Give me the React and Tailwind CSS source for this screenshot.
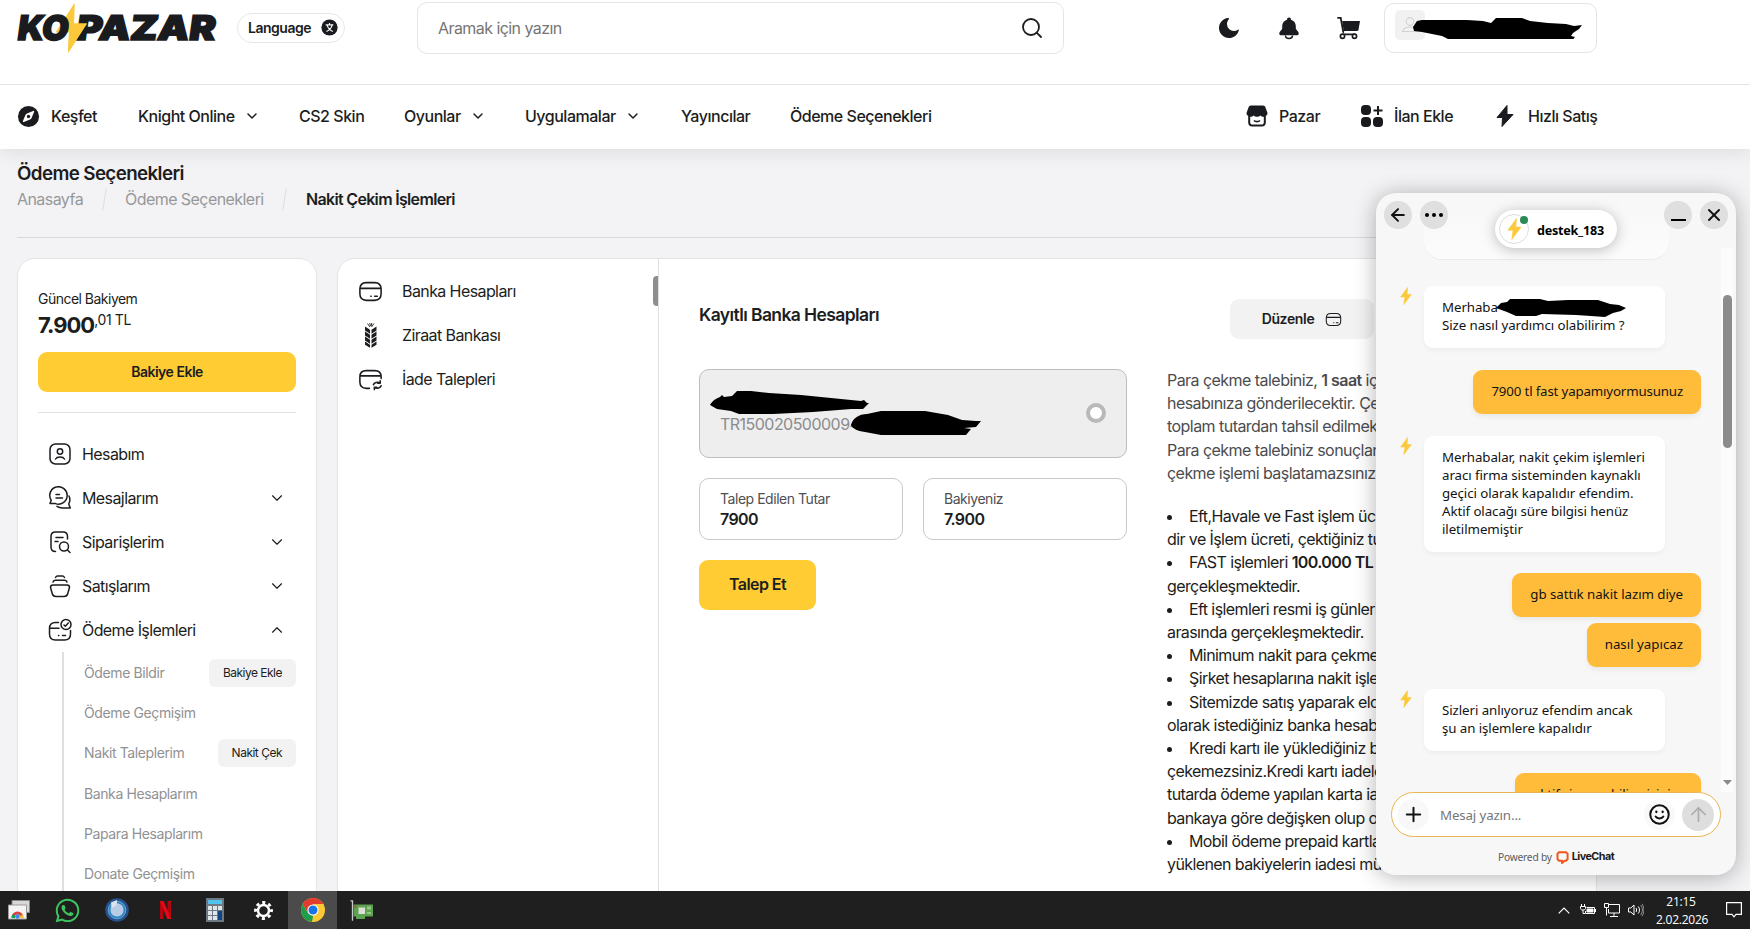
import React from "react";
import { FiChevronDown, FiChevronUp, FiSearch, FiArrowLeft, FiX, FiPlus, FiArrowUp } from "react-icons/fi";
import { FaWhatsapp } from "react-icons/fa";

const NAV = [
  { label: "Knight Online", width: "w-[161px]", arrow: true },
  { label: "CS2 Skin", width: "w-[105px]" },
  { label: "Oyunlar", width: "w-[121px]", arrow: true },
  { label: "Uygulamalar", width: "w-[156px]", arrow: true },
  { label: "Yayıncılar", width: "w-[109px]" },
  { label: "Ödeme Seçenekleri", width: "w-[160px]" },
];

const SUB_ITEMS = [
  { label: "Ödeme Bildir", action: "Bakiye Ekle" },
  { label: "Ödeme Geçmişim" },
  { label: "Nakit Taleplerim", action: "Nakit Çek" },
  { label: "Banka Hesaplarım" },
  { label: "Papara Hesaplarım" },
  { label: "Donate Geçmişim" },
];

const Bolt = ({ className }) => (
  <svg viewBox="0 0 12 18" className={className}>
    <path d="M7.6 0.4 0.6 10h4.2L3.8 17.6 11.4 7.4H7z" fill="#fbc93b" stroke="#fbc93b" strokeWidth="0.5" strokeLinejoin="round" />
  </svg>
);

const Line = ({ className = "size-[24px]", children }) => (
  <svg viewBox="0 0 24 24" fill="none" stroke="#1c1d20" strokeWidth="1.5" strokeLinecap="round" strokeLinejoin="round" className={className}>
    {children}
  </svg>
);

const CardIcon = ({ className }) => (
  <Line className={className}>
    <path d="M1.800 10c0-4 1.700-6.500 6.200-6.500h8c4.500 0 6.200 2.500 6.200 6.500v4c0 4-1.700 6.500-6.200 6.500H8c-4.500 0-6.200-2.500-6.200-6.500z" />
    <path d="M2.300 9h19.400M12.300 16.500h.3M16 16.500h2.500" />
  </Line>
);

const Logo = () => (
  <svg viewBox="0 0 204 56" className="h-14 w-[204px] shrink-0 overflow-visible">
    <g fontFamily="Inter, sans-serif" fontWeight="900" fontSize="34" fill="#1a1b1e" stroke="#1a1b1e" strokeWidth="1.600" strokeLinejoin="miter">
      <text x="59" y="40" textLength="139" lengthAdjust="spacingAndGlyphs" transform="translate(5 0) skewX(-8)">PAZAR</text>
      <path d="M57.500 3 38.500 32.500H52L51 53 70 23.500H57z" fill="#fbc93b" stroke="none" />
      <text x="0" y="40" textLength="51" lengthAdjust="spacingAndGlyphs" transform="translate(5 0) skewX(-8)">KO</text>
    </g>
    <path d="M57.500 3 53 20 52 32.500 51 53 70 23.500H57z" fill="#fbc93b" />
  </svg>
);

const Header = () => (
  <header className="relative z-20 flex h-[85px] items-start border-b border-[#e4e4e4] bg-white pl-[17px]">
    <Logo />
    <div className="mt-[13px] ml-[16px] flex h-[30px] w-[108px] items-center justify-between rounded-full border border-[#e6e6e6] pr-[6px] pb-px pl-[10px] text-[14px] font-semibold tracking-[-0.035em]">
      Language
      <svg viewBox="0 0 18 18" className="size-[17px]">
        <circle cx="9" cy="9" r="8.600" fill="#1a1b1e" />
        <path d="M5 6.200h8M9 4.200v2M6.500 6.500c.8 3 3 5.500 6 6.800M11.800 6.500c-.8 3-3 5.500-6 6.800" stroke="#fff" strokeWidth="1.200" fill="none" />
      </svg>
    </div>
    <div className="mt-[2px] ml-[72px] flex h-[52px] w-[647px] items-center justify-between rounded-[10px] border border-[#e4e4e4] pr-[19px] pl-[20px] text-[16px] tracking-[-0.035em] text-[#757575]">
      Aramak için yazın
      <FiSearch className="size-[24px] text-[#1c1d20]" strokeWidth={1.800} />
    </div>
    <div className="mt-[16px] ml-[153px] flex gap-[36px]">
      <svg viewBox="0 0 24 24" className="size-[24px]" fill="#1a1b1e">
        <path d="M11 2C6 2.500 2 6.700 2 12c0 5.500 4.500 10 10 10 4.700 0 8.700-3.200 9.800-7.600.2-.8-.4-1-.9-.6A6.700 6.700 0 0 1 17 15a7 7 0 0 1-7-7c0-1.900.7-3.500 1.800-4.800.5-.7.1-1.300-.8-1.200z" />
      </svg>
      <svg viewBox="0 0 24 24" className="size-[24px]" fill="#1a1b1e">
        <path d="M12 1.500a2 2 0 0 0-2 2.200C7 4.600 5.200 7 5.200 10v2.500c0 1.300-3 2.800-3 5 0 1.200.8 1.800 2 1.800h15.600c1.200 0 2-.6 2-1.800 0-2.200-3-3.700-3-5V10c0-3-1.800-5.400-4.800-6.300a2 2 0 0 0-2-2.200z" />
        <path d="M8.500 19.500a3.500 3 0 0 0 7 0" fill="none" stroke="#1a1b1e" strokeWidth="1.500" />
      </svg>
      <svg viewBox="0 0 24 24" className="size-[24px]" fill="#1a1b1e">
        <path d="M5.200 5H23l-1.500 8.700c-.1.800-.6 1.200-1.400 1.200H6.800z" />
        <path d="M1 1.800h2.700L6.300 16M6 18.300h12" fill="none" stroke="#1a1b1e" strokeWidth="1.800" strokeLinecap="round" />
        <circle cx="5.500" cy="20.200" r="2.100" fill="#fff" stroke="#1a1b1e" strokeWidth="1.700" />
        <circle cx="17.500" cy="20.200" r="2.100" fill="#fff" stroke="#1a1b1e" strokeWidth="1.700" />
      </svg>
    </div>
    <div className="relative mt-[3px] ml-[23px] h-[50px] w-[213px] rounded-[10px] border border-[#e4e4e4] pt-[6px] pl-[10px]">
      <svg viewBox="0 0 30 30" className="size-[30px]">
        <rect width="30" height="30" rx="5" fill="#f1f1f1" />
        <g fill="none" stroke="#d2d2d2" strokeWidth="1.200">
          <circle cx="15" cy="11.500" r="3.800" />
          <path d="M7.500 21.500c1-3 4-4.500 7.500-4.500s6.500 1.500 7.500 4.500z" />
        </g>
      </svg>
      <svg viewBox="0 0 172 24" className="absolute top-[11px] left-[27px] h-[24px] w-[172px]">
        <path d="M1 12 5 6l5-1 45 0 16 1 8 2 5-5 26 0 8 3 18 2 18 1 8 2 8-1-3 4-6 4-2 3 4 1-4 5-8 1-40 0-40-2-33-1-8-4-20-4-8-1z" />
      </svg>
    </div>
  </header>
);

const NavBar = () => (
  <nav className="relative z-10 flex h-[64px] items-center bg-white pb-[2px] pl-[17px] text-[16px] font-medium tracking-[-0.03em] shadow-[0_2px_20px_rgba(0,0,0,0.1)]">
    <div className="flex w-[121px] items-center gap-[11px]">
      <svg viewBox="0 0 24 24" className="size-[23px]">
        <circle cx="12" cy="12" r="11" fill="#1a1b1e" />
        <path d="M16.800 6.200c.8-.3 1.300.2 1 1l-2.600 6.300c-.3.800-.9 1.400-1.700 1.700l-6.300 2.600c-.8.300-1.300-.2-1-1l2.600-6.300c.3-.8.900-1.400 1.700-1.700z" fill="#fff" />
        <circle cx="12" cy="12" r="1.700" fill="#1a1b1e" />
      </svg>
      Keşfet
    </div>
    {NAV.map((item) => (
      <div key={item.label} className={`flex items-center gap-[9px] whitespace-nowrap ${item.width}`}>
        {item.label}
        {item.arrow && <FiChevronDown className="size-[16px]" strokeWidth={2.200} />}
      </div>
    ))}
    <div className="ml-[295px] flex w-[115px] items-center gap-[10px]">
      <svg viewBox="0 0 24 24" className="size-[24px]">
        <path d="M6 1.500h12c1.300 0 2 .7 2.400 1.800L22.500 9a3 3 0 0 1-1.700 3v6.500c0 2.500-1.500 4-4 4H7.200c-2.500 0-4-1.500-4-4V12a3 3 0 0 1-1.700-3l2.100-5.700C4 2.200 4.700 1.500 6 1.500z" fill="#1a1b1e" />
        <path d="M5.200 12.800c1.500.2 2.600-.4 3.300-1.400 1.800 1.900 5.200 1.900 7 0 .7 1 1.800 1.600 3.300 1.400v5.500c0 1.500-.8 2.300-2.300 2.300h-9c-1.500 0-2.300-.8-2.300-2.300z" fill="#fff" />
        <path d="M9 16.500c1.500 1.600 4.500 1.600 6 0" fill="none" stroke="#1a1b1e" strokeWidth="1.700" />
      </svg>
      Pazar
    </div>
    <div className="flex w-[133px] items-center gap-[10px]">
      <svg viewBox="0 0 24 24" className="size-[24px]" fill="#1a1b1e">
        <rect x="1" y="1" width="10" height="10" rx="4" />
        <rect x="1" y="13" width="10" height="10" rx="4" />
        <rect x="13" y="13" width="10" height="10" rx="4" />
        <path d="M18 2v9M13.500 6.500h9" stroke="#1a1b1e" strokeWidth="2" />
      </svg>
      İlan Ekle
    </div>
    <div className="flex items-center gap-[11px]">
      <svg viewBox="0 0 24 24" className="size-[24px]">
        <path d="M14 1.500 4 13.500h5.500l-.5 9L20 10.500h-6z" fill="#1a1b1e" stroke="#1a1b1e" strokeWidth="1" strokeLinejoin="round" />
      </svg>
      Hızlı Satış
    </div>
  </nav>
);

const MenuRow = ({ icon, label, arrow }) => (
  <div className="flex h-[44px] items-center pr-[10px] pl-[10px] text-[16px] tracking-[-0.037em]">
    {icon}
    <span className="ml-[10px] flex-1">{label}</span>
    {arrow === "down" && <FiChevronDown className="size-[18px]" strokeWidth={1.500} />}
    {arrow === "up" && <FiChevronUp className="size-[18px]" strokeWidth={1.500} />}
  </div>
);

const Sidebar = () => (
  <aside className="h-[660px] w-[300px] shrink-0 rounded-[18px] border border-[#e4e4e6] bg-white px-[20px] pt-[29px]">
    <div className="h-[22px] text-[14px] leading-[22px] tracking-[-0.037em]">Güncel Bakiyem</div>
    <div className="flex h-[42px] items-start">
      <span className="mt-[2px] text-[22px] leading-[26px] font-bold tracking-[-0.045em]">7.900</span>
      <span className="text-[14px] leading-[20px] tracking-[-0.025em]">,01 TL</span>
    </div>
    <button className="block h-[40px] w-full rounded-[9px] bg-[#ffcc33] pb-[2px] text-[14px] font-semibold tracking-[-0.035em]">Bakiye Ekle</button>
    <div className="mt-[20px] mb-[19px] h-px bg-[#e0e0e0]" />
    <MenuRow
      label="Hesabım"
      icon={
        <Line>
          <rect x="2" y="2" width="20" height="20" rx="5.500" />
          <circle cx="12" cy="9.500" r="2.700" />
          <path d="M7.500 17c1.500-2.600 7.500-2.600 9 0" />
        </Line>
      }
    />
    <MenuRow
      label="Mesajlarım"
      arrow="down"
      icon={
        <Line>
          <path d="M3.200 14.200A8.700 8.700 0 1 1 7.500 17.600H2l1.200-3.400zM8 8.500h3.500M8 12h6.500" />
          <path d="M21 10c1.200 2.500 1.200 5.300-.3 8l1.600 4H15c-2.300.1-4.400-.4-6-1.600" />
        </Line>
      }
    />
    <MenuRow
      label="Siparişlerim"
      arrow="down"
      icon={
        <Line>
          <path d="M7.500 21.500C4 21.500 3 20 3 17V6.500C3 3.500 4.500 2 7.500 2H15c3 0 4.500 1.500 4.500 4.500V9M8 7.500h7M7 11.500h3" />
          <circle cx="16" cy="16.500" r="4.500" />
          <path d="m19.500 20 2.500 2.500" />
        </Line>
      }
    />
    <MenuRow
      label="Satışlarım"
      arrow="down"
      icon={
        <Line>
          <path d="M2.500 13.500c0-1.500 1-2.500 2.500-2.500h14c1.500 0 2.500 1 2.500 2.500l-1.800 6.300c-.5 1.700-1.500 2.700-3.500 2.700H7.800c-2 0-3-1-3.500-2.700zM5 8c.5-1.300 1.200-1.700 2.500-1.700h9c1.300 0 2 .4 2.500 1.700M7.500 3.500C8 2.500 8.600 2 9.500 2h5c.9 0 1.500.5 2 1.500" />
        </Line>
      }
    />
    <MenuRow
      label="Ödeme İşlemleri"
      arrow="up"
      icon={
        <Line>
          <path d="M10.500 4.500H7.500C3.500 4.500 1.500 6.500 1.500 10.500v5.500c0 4 2 6 6 6h9c4 0 6-2 6-6v-3.500M1.500 10.200h9.500M10.500 17.500h.3M14.500 17.500h3" />
          <circle cx="18" cy="6.500" r="5" />
          <path d="m16 7 1.300 1.200 3-3.200" />
        </Line>
      }
    />
    <div className="ml-[24px] border-l-2 border-[#dfdfe1] pl-[20px]">
      {SUB_ITEMS.map((item) => (
        <div key={item.label} className="flex h-[40.300px] items-center justify-between text-[14px] tracking-[-0.028em] text-[#919193]">
          {item.label}
          {item.action && (
            <span className="mt-px rounded-[6px] bg-[#f2f2f2] px-[14px] text-[12px] leading-[28px] tracking-[-0.042em] text-[#1c1d20]">{item.action}</span>
          )}
        </div>
      ))}
      <div className="h-4" />
    </div>
  </aside>
);

const SubMenu = () => (
  <div className="relative w-[321px] shrink-0 border-r border-[#e0e0e2] pt-[10px] pl-[20px] text-[16px] tracking-[-0.037em]">
    <div className="flex h-[44px] items-center gap-[19px]"><CardIcon className="size-[25px]" />Banka Hesapları</div>
    <div className="flex h-[44px] items-center gap-[19px]">
      <svg viewBox="0 0 25 25" className="size-[25px]" fill="#1c1d20">
        {[5, 10, 15].map((y) => (
          <g key={y}>
            <path d={`M7 ${y - 1.500}l5 3.200v4L7 ${y + 2.500}z`} />
            <path d={`M18.500 ${y - 1.500}l-5 3.200v4l5-3.200z`} />
          </g>
        ))}
        <path d="M7 18.500l5 3.200v3L7 21.800zM18.500 18.500l-5 3.200v3l5-2.900z" />
        <path d="M9.500.5 12 4M16 .5 13.500 4M11.700 0l.8 3M13.800 0l-.6 3" stroke="#1c1d20" strokeWidth=".9" />
      </svg>
      Ziraat Bankası
    </div>
    <div className="flex h-[44px] items-center gap-[19px]">
      <Line className="size-[25px]">
        <path d="M11 20.500H8c-4.500 0-6.200-2.400-6.200-6V9.500c0-3.600 1.700-6 6.200-6h8c4.500 0 6.200 2.400 6.200 6V11M2.300 8.500h19.400" />
        <path d="M14.800 17c.6-2.200 4-3.200 6.200-1.500M21.300 13.300v2.300h-2.300M22.200 18c-.6 2.200-4 3.200-6.200 1.500M15.700 21.700v-2.300H18" />
      </Line>
      İade Talepleri
    </div>
    <div className="absolute top-[17px] right-0 h-[30px] w-[5px] rounded-l-[4px] bg-[#8d8e90]" />
  </div>
);

const Field = ({ label, value }) => (
  <div className="h-[62px] rounded-[10px] border border-[#c9c9c9] pt-[10px] pl-[20px]">
    <div className="text-[14px] leading-[20px] tracking-[-0.033em] text-[#4e4f52]">{label}</div>
    <div className="text-[16px] leading-[20px] font-semibold tracking-[-0.04em]">{value}</div>
  </div>
);

const BankAccounts = () => (
  <div className="w-[428px] shrink-0">
    <h2 className="mt-[44px] h-[24px] text-[17.500px] leading-[24px] font-semibold tracking-[-0.034em]">Kayıtlı Banka Hesapları</h2>
    <div className="relative mt-[42px] flex h-[89px] items-center justify-between rounded-[10px] border border-[#bdbdbd] bg-[#eeeeee] pr-[20px] pb-[2px] pl-[20px]">
      <span className="mt-[22px] text-[16px] tracking-[-0.033em] text-[#8b8b8d]">TR1500205000094</span>
      <span className="size-[20px] rounded-full border-[4.500px] border-[#b9b9b9] bg-white" />
      <svg viewBox="0 0 280 60" className="absolute top-[15px] left-[3px] h-[60px] w-[280px]">
        <path d="M7 20c3-5 7-7 10-8l2-2 2 2 8-1 5-5h14l18 2 32 2 30 3 20 2 10 1 3-1 3 3 2 0-6 6-12 0-38 3-40 2-34 0-8-3-14-2z" />
        <path d="M148 40c2-7 8-11 16-11l14-3h44l23 4 14 5 14 1 5 0-5 6-12 1 7 1-5 6-12 0H178l-16-3c-8-1-13-4-14-7z" />
      </svg>
    </div>
    <div className="mt-[20px] grid grid-cols-2 gap-[20px]">
      <Field label="Talep Edilen Tutar" value="7900" />
      <Field label="Bakiyeniz" value="7.900" />
    </div>
    <button className="mt-[20px] h-[50px] w-[117px] rounded-[9px] bg-[#ffcc33] pb-[2px] text-[16px] font-semibold tracking-[-0.035em]">Talep Et</button>
  </div>
);

const Info = () => (
  <div className="ml-[40px] w-[389px] shrink-0 text-[16px] leading-[23.200px] tracking-[-0.037em] whitespace-nowrap">
    <div className="mt-[40px] ml-[63px] flex h-[40px] w-[144px] items-center justify-center gap-[11px] rounded-[9px] bg-[#f2f2f2] text-[14px] font-semibold tracking-[-0.025em]">
      Düzenle
      <CardIcon className="size-[17px]" />
    </div>
    <p className="mt-[30px] tracking-[-0.034em] text-[#4b4c4f]">
      Para çekme talebiniz, <b className="font-semibold">1 saat</b> içinde<br />
      hesabınıza gönderilecektir. Çekim<br />
      toplam tutardan tahsil edilmektedir.<br />
      Para çekme talebiniz sonuçlanmadan<br />
      çekme işlemi başlatamazsınız.
    </p>
    <ul className="mt-[20px] list-inside list-disc">
      <li>Eft,Havale ve Fast işlem ücreti<br />dir ve İşlem ücreti, çektiğiniz tutardan</li>
      <li>FAST işlemleri <b className="font-semibold">100.000 TL</b><br />gerçekleşmektedir.</li>
      <li>Eft işlemleri resmi iş günleri<br />arasında gerçekleşmektedir.</li>
      <li>Minimum nakit para çekme</li>
      <li>Şirket hesaplarına nakit işlemi</li>
      <li>Sitemizde satış yaparak elde<br />olarak istediğiniz banka hesabına</li>
      <li>Kredi kartı ile yüklediğiniz bakiye<br />çekemezsiniz.Kredi kartı iadeleri<br />tutarda ödeme yapılan karta iade<br />bankaya göre değişken olup o</li>
      <li>Mobil ödeme prepaid kartlar<br />yüklenen bakiyelerin iadesi mümkün</li>
    </ul>
  </div>
);

const AgentMessage = ({ className, children }) => (
  <div className={`relative ml-[48px] w-[241px] shrink-0 rounded-[9px] bg-white px-[18px] pt-[12px] pb-[14px] tracking-[-0.006em] whitespace-nowrap shadow-[0_3px_5px_rgba(0,0,0,0.04)] ${className}`}>
    <Bolt className="absolute top-[1px] left-[-24px] h-[18px] w-[12px]" />
    {children}
  </div>
);

const UserMessage = ({ className, children }) => (
  <div className={`mr-[35px] shrink-0 self-end rounded-[9px] bg-[#ffbc3b] px-[18px] pt-[12px] pb-[14px] whitespace-nowrap shadow-[0_3px_5px_rgba(0,0,0,0.06)] ${className}`}>{children}</div>
);

const Chat = () => (
  <section className="absolute top-[193px] left-[1376px] z-20 h-[682px] w-[360px] overflow-hidden rounded-[20px] bg-[#f7f7f7] font-['Noto_Sans',sans-serif] text-[13.300px] leading-[18px] text-[#131313] shadow-[0_2px_22px_rgba(0,0,0,0.3)]">
    <div className="relative flex h-[599px] flex-col overflow-hidden">
      <div className="ml-[48px] h-[67px] w-[245px] shrink-0 rounded-b-[18px] border-b border-[#ebebeb] bg-gradient-to-b from-[#f7f7f7] to-[#fcfcfc]" />
      <AgentMessage className="mt-[26px]">
        Merhaba<br />Size nasıl yardımcı olabilirim ?
        <svg viewBox="0 0 130 20" className="absolute top-[11px] left-[72px] h-[20px] w-[130px]">
          <path d="M0 11 5 6 11 5l3-3 30 0 8 2 20-1 30 0 12 4 9 1 7 3-5 3-8 2-8 4-14-1-15-1-34-1-6 2H20l-9-4z" />
        </svg>
      </AgentMessage>
      <UserMessage className="mt-[22px] tracking-[-0.012em]">7900 tl fast yapamıyormusunuz</UserMessage>
      <AgentMessage className="mt-[22px]">
        Merhabalar, nakit çekim işlemleri<br />aracı firma sisteminden kaynaklı<br />geçici olarak kapalıdır efendim.<br />Aktif olacağı süre bilgisi henüz<br />iletilmemiştir
      </AgentMessage>
      <UserMessage className="mt-[21px] tracking-[-0.004em]">gb sattık nakit lazım diye</UserMessage>
      <UserMessage className="mt-[6px]">nasıl yapıcaz</UserMessage>
      <AgentMessage className="mt-[22px]">Sizleri anlıyoruz efendim ancak<br />şu an işlemlere kapalıdır</AgentMessage>
      <UserMessage className="mt-[22px] w-[186px] tracking-[-0.012em]">aktif siz yapabilirmisiniz</UserMessage>
      <div className="absolute top-[55px] right-[3px] flex h-[544px] w-[12px] flex-col items-center bg-[#fcfcfc]">
        <div className="mt-[47px] h-[153px] w-[9px] rounded-full bg-[#8c8c8c]" />
        <svg viewBox="0 0 9 6" className="mt-[332px] h-[6px] w-[9px]"><path d="M0 0h9L4.500 5z" fill="#8a8a8a" /></svg>
      </div>
    </div>
    <div className="absolute inset-x-0 top-0 flex justify-between px-[8px] pt-[8px]">
      <div className="flex gap-[8px]">
        <span className="flex size-[28px] items-center justify-center rounded-full bg-[#dfdfdf]"><FiArrowLeft className="size-[20px]" strokeWidth={2.400} /></span>
        <span className="flex size-[28px] items-center justify-center gap-[3px] rounded-full bg-[#dfdfdf]">
          <i className="size-[4px] rounded-full bg-black" />
          <i className="size-[4px] rounded-full bg-black" />
          <i className="size-[4px] rounded-full bg-black" />
        </span>
      </div>
      <div className="absolute top-[17px] left-[119px] flex h-[38px] w-[122px] items-center rounded-full bg-white pl-[4px] shadow-[0_2px_14px_rgba(0,0,0,0.25)]">
        <span className="relative flex size-[30px] items-center justify-center rounded-full border border-[#dddddd]">
          <Bolt className="h-[22px] w-[15px]" />
          <i className="absolute top-[1px] right-0 size-[8px] rounded-full bg-[#2c8a55]" />
        </span>
        <span className="mt-[3px] ml-[8px] text-[12.600px] font-bold tracking-[-0.02em] text-black">destek_183</span>
      </div>
      <div className="flex gap-[8px]">
        <span className="flex size-[28px] items-end justify-center rounded-full bg-[#dfdfdf] pb-[8px]"><i className="h-[2px] w-[15px] bg-black" /></span>
        <span className="flex size-[28px] items-center justify-center rounded-full bg-[#dfdfdf]"><FiX className="size-[20px]" strokeWidth={2.400} /></span>
      </div>
    </div>
    <div className="relative mx-[15px] flex h-[45px] items-center rounded-full border border-[#eab552] bg-white pr-[6px] pl-[6px]">
      <span className="flex size-[31px] items-center justify-center rounded-full bg-[#f8f8f8]"><FiPlus className="size-[23px]" strokeWidth={2.100} /></span>
      <span className="ml-[11px] flex-1 tracking-[-0.01em] text-[#767676]">Mesaj yazın...</span>
      <span className="mr-[7px] flex size-[31px] items-center justify-center rounded-full bg-[#f9f9f9]">
        <svg viewBox="0 0 20 20" className="size-[21px]" fill="none" stroke="#111" strokeWidth="1.900" strokeLinecap="round">
          <circle cx="10" cy="10" r="8.800" />
          <path d="M6.300 12c1.500 2.500 5.900 2.500 7.400 0" />
          <path d="M7 7.400v.3M13 7.400v.3" strokeWidth="2.200" />
        </svg>
      </span>
      <span className="flex size-[32px] items-center justify-center rounded-full bg-[#dedede]"><FiArrowUp className="size-[23px] text-[#adadad]" strokeWidth={1.800} /></span>
    </div>
    <div className="mt-[11px] flex items-center pl-[122px] text-[10.200px] tracking-[-0.02em] text-[#5c5c5c]">
      Powered by
      <svg viewBox="0 0 13 13" className="ml-[4px] size-[13px]">
        <path d="M3 1.300h7l1.600 1.500v5.500L10 9.800H8.500L6 12V9.800H3L1.500 8.300V2.800z" fill="none" stroke="#f0561d" strokeWidth="2" strokeLinejoin="round" />
      </svg>
      <span className="ml-[3px] font-['Inter'] text-[10.800px] font-bold tracking-[-0.05em] text-[#1b1b20]">LiveChat</span>
    </div>
  </section>
);

const Taskbar = () => (
  <footer className="absolute inset-x-0 bottom-0 z-30 flex h-[38px] items-center justify-between overflow-hidden bg-[#1f1f1f] font-['Open_Sans',sans-serif] text-white">
    <div className="-ml-[6px] flex h-full">
      <span className="flex w-[49px] items-center justify-center">
        <svg viewBox="0 0 22 20" className="h-[20px] w-[22px]">
          <path d="M4 0.500h17.500v12H4z" fill="#d7d7d7" stroke="#888" />
          <path d="M.5 5h18v14H.5z" fill="#f4f4f4" stroke="#9b9b9b" />
          <path d="M3.500 17.500a6 6 0 0 1 12 0h-3a3 3 0 0 0-6 0z" fill="#db4437" />
          <path d="M3.500 18a6 6 0 0 1 1.500-4l2.500 2-.5 2z" fill="#109d58" />
          <path d="M12.500 18l-.5-2 2.500-1.500 1.200 3.500z" fill="#f7c02c" />
          <circle cx="9.500" cy="16.500" r="2.300" fill="#4285f4" />
        </svg>
      </span>
      <span className="flex w-[49px] items-center justify-center"><FaWhatsapp className="size-[27px] text-[#3fc55f]" /></span>
      <span className="flex w-[49px] items-center justify-center">
        <svg viewBox="0 0 24 24" className="size-[24px]">
          <circle cx="12" cy="12" r="11.800" fill="#29508c" />
          <circle cx="12" cy="12" r="8.800" fill="#2f87bd" stroke="#61a6d3" strokeWidth="1" />
          <path d="M12 5.500c4 0 6.500 2.500 6.500 6.500s-3 6.500-6.500 6.500-6.500-3-6.500-6c0-3 1-6 2.500-9z" fill="#b9cce5" />
          <path d="M6 4.500 12 2v5l-5 3z" fill="#d9e2f0" />
        </svg>
      </span>
      <span className="flex w-[49px] items-center justify-center">
        <svg viewBox="0 0 11 18" className="h-[18px] w-[11px]">
          <path d="M0 0h3.500v18H0zM7.500 0H11v18H7.500z" fill="#b20710" />
          <path d="M0 0h3.700L11 18H7.300z" fill="#e50914" />
        </svg>
      </span>
      <span className="flex w-[49px] items-center justify-center">
        <svg viewBox="0 0 18 24" className="h-[24px] w-[18px]">
          <rect width="18" height="24" fill="#6d7a83" />
          <rect x="2" y="2" width="14" height="4" fill="#4fc4ec" />
          {[8, 13, 18].map((y) => (
            <g key={y} fill="#dfe4e8">
              <rect x="2" y={y} width="4" height="4" />
              <rect x="7" y={y} width="4" height="4" />
              {y === 8 && <rect x="12" y={y} width="4" height="4" />}
            </g>
          ))}
          <rect x="12" y="13" width="4" height="9" fill="#114482" />
        </svg>
      </span>
      <span className="flex w-[49px] items-center justify-center">
        <svg viewBox="0 0 20 20" className="size-[19px]">
          <circle cx="10" cy="10" r="5.800" fill="none" stroke="#fff" strokeWidth="2.600" />
          <circle cx="10" cy="10" r="8.400" fill="none" stroke="#fff" strokeWidth="3" strokeDasharray="3.300 3.300" strokeDashoffset="1.650" />
        </svg>
      </span>
      <span className="flex w-[49px] items-center justify-center bg-[#4b4b4b]">
        <svg viewBox="0 0 24 24" className="size-[24px]">
          <circle cx="12" cy="12" r="12" fill="#fcc934" />
          <path d="M12 12 6.800 15 1.600 6A12 12 0 0 1 22.400 6H12z" fill="#e33b2e" />
          <path d="M1.600 6 6.800 15 12 18l-.8 6A12 12 0 0 1 1.600 6z" fill="#1e9e4a" />
          <path d="M17.200 15 12 24h-1l3-8z" fill="#fcc934" />
          <circle cx="12" cy="12" r="5.600" fill="#fff" />
          <circle cx="12" cy="12" r="4.500" fill="#1a73e8" />
        </svg>
      </span>
      <span className="flex w-[49px] items-center justify-center">
        <svg viewBox="0 0 23 21" className="h-[21px] w-[23px]">
          <path d="M.5.8h2v20" fill="none" stroke="#c8cdd0" strokeWidth="1.300" />
          <path d="M3.500 4.500H23v12h-8v2.500H6v-2.500H3.500z" fill="#5ca24f" />
          <rect x="8.500" y="7.500" width="6.500" height="6.500" fill="#d9dfd6" />
          <path d="M17 6.500h4v3h-4zM17 12h4v2h-4z" fill="#93c886" />
          <path d="M4.500 5.500h2v2h-2z" fill="#b1483a" />
        </svg>
      </span>
    </div>
    <div className="flex h-full items-center pr-[8px]">
      <svg viewBox="0 0 12 7" className="h-[7px] w-[12px]" fill="none" stroke="#fff" strokeWidth="1.200"><path d="M.7 6.300 6 1l5.300 5.300" /></svg>
      <svg viewBox="0 0 16 12" className="ml-[10px] h-[12px] w-[16px]" fill="none" stroke="#fff">
        <path d="M1.500 0v2M4.500 0v2M.5 2.500h5v2c0 1-1 1.500-2.500 1.500S.5 5.500.5 4.500zM3 6v3.500h2M6.500 3.500h8v6h-9v-2.500M15.500 5v3" />
        <path d="M7 5h6v3H7z" fill="#fff" />
      </svg>
      <svg viewBox="0 0 16 14" className="ml-[8px] h-[14px] w-[16px]" fill="none" stroke="#fff">
        <path d="M5 1.500h10.500v8.500h-11V6M10 10v3M6 13.500h8M.5.500h4v4h-4zM2.500 4.500v8" />
      </svg>
      <svg viewBox="0 0 16 14" className="ml-[8px] h-[14px] w-[16px]" fill="none" stroke="#fff">
        <path d="M.5 5h2.300l3.200-3v10L2.800 9H.5zM8 5c.8 1.200.8 2.800 0 4M10.300 3.500c1.600 2 1.600 5 0 7" />
        <path d="M12.600 2c2.400 3 2.400 7 0 10M14 .800c2.500 3.500 2.500 8.800 0 12.400" opacity=".5" />
      </svg>
      <div className="mt-px ml-[12px] w-[50px] text-center text-[12px] leading-[18px] tracking-[-0.02em] whitespace-nowrap">21:15<br />2.02.2026</div>
      <svg viewBox="0 0 16 16" className="ml-[20px] h-[16px] w-[16px]" fill="none" stroke="#fff" strokeWidth="1.200"><path d="M.6.6h14.800v11.800H10L8 14.800 6 12.400H.6z" /></svg>
    </div>
  </footer>
);

const App = () => (
  <div className="relative h-[929px] w-[1750px] overflow-hidden bg-[#f3f3f5] font-['Inter',sans-serif] text-[#1c1d20]">
    <Header />
    <NavBar />
    <main className="px-[17px]">
      <h1 className="mt-[12px] h-[26px] text-[18.800px] leading-[26px] font-semibold tracking-[-0.033em]">Ödeme Seçenekleri</h1>
      <div className="flex h-[24px] items-center text-[16px] tracking-[-0.035em] text-[#97989a]">
        <span className="w-[87px]">Anasayfa</span>
        <i className="h-[23px] w-px rotate-[9deg] bg-[#dededf]" />
        <span className="ml-[20px] w-[159px]">Ödeme Seçenekleri</span>
        <i className="h-[23px] w-px rotate-[9deg] bg-[#dededf]" />
        <span className="ml-[21px] font-semibold tracking-[-0.042em] text-[#1c1d20]">Nakit Çekim İşlemleri</span>
      </div>
      <div className="mt-[26px] h-px w-[1580px] bg-[#d9d9dc]" />
      <div className="mt-[20px] flex gap-[20px]">
        <Sidebar />
        <div className="flex h-[660px] w-[1260px] shrink-0 rounded-[18px] border border-[#e4e4e6] bg-white">
          <SubMenu />
          <div className="flex pl-[40px]">
            <BankAccounts />
            <Info />
          </div>
        </div>
      </div>
    </main>
    <Chat />
    <Taskbar />
  </div>
);

export default App;
